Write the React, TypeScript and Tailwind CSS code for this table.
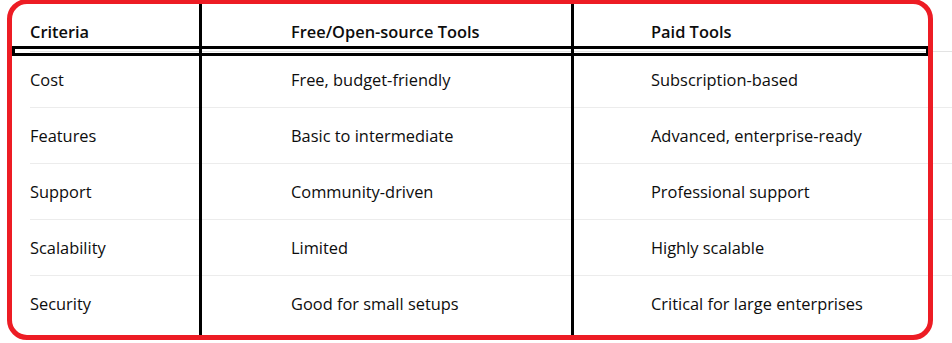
const rows = [
  ['Cost', 'Free, budget-friendly', 'Subscription-based'],
  ['Features', 'Basic to intermediate', 'Advanced, enterprise-ready'],
  ['Support', 'Community-driven', 'Professional support'],
  ['Scalability', 'Limited', 'Highly scalable'],
  ['Security', 'Good for small setups', 'Critical for large enterprises'],
]

export default function App() {
  return (
    <div
      className="relative h-[343px] w-[952px] overflow-hidden bg-white text-[16.4px] text-[#0d0d0d]"
      style={{ fontFamily: '"Open Sans", "Noto Sans", sans-serif' }}
    >
      <div className="pl-[30px]">
        <div className="grid h-[52px] grid-cols-[261px_360px_1fr] border-b border-[#e3e3e3] pt-[20px] font-semibold leading-6">
          <div>Criteria</div>
          <div>Free/Open-source Tools</div>
          <div>Paid Tools</div>
        </div>
        {rows.map((r, i) => (
          <div
            key={r[0]}
            className={`grid h-[56px] grid-cols-[261px_360px_1fr] items-center leading-6 ${
              i < rows.length - 1 ? 'border-b border-[#ececec]' : ''
            }`}
          >
            <div>{r[0]}</div>
            <div>{r[1]}</div>
            <div>{r[2]}</div>
          </div>
        ))}
      </div>

      {/* annotation overlays */}
      <div className="absolute left-[12px] top-[46px] h-[10px] w-[917px] border-[3px] border-black" />
      <div className="absolute left-[199px] top-[2px] h-[333px] w-[3px] bg-black" />
      <div className="absolute left-[571px] top-[2px] h-[333px] w-[3px] bg-black" />
      <div className="absolute left-[7px] top-[-1px] h-[341px] w-[926px] rounded-[20px] border-[5px] border-[#ed1c24]" />
    </div>
  )
}
